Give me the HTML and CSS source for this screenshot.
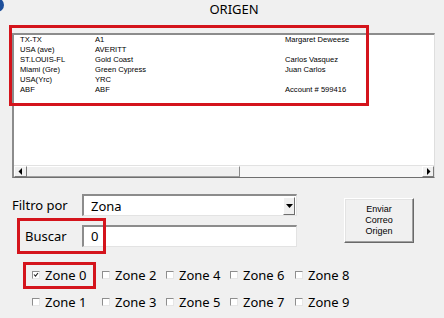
FILE: index.html
```html
<!DOCTYPE html>
<html lang="es">
<head>
<meta charset="utf-8">
<title>ORIGEN</title>
<link rel="stylesheet" href="styles.css">
</head>
<body>
<div class="badge"></div>
<div class="title">ORIGEN</div>

<div class="listbox">
  <div class="rows">
    <div class="row"><span class="c1">TX-TX</span><span class="c2">A1</span><span class="c3">Margaret Deweese</span></div>
    <div class="row"><span class="c1">USA (ave)</span><span class="c2">AVERITT</span><span class="c3"></span></div>
    <div class="row"><span class="c1">ST.LOUIS-FL</span><span class="c2">Gold Coast</span><span class="c3">Carlos Vasquez</span></div>
    <div class="row"><span class="c1">Miami (Gre)</span><span class="c2">Green Cypress</span><span class="c3">Juan Carlos</span></div>
    <div class="row"><span class="c1">USA(Yrc)</span><span class="c2">YRC</span><span class="c3"></span></div>
    <div class="row"><span class="c1">ABF</span><span class="c2">ABF</span><span class="c3">Account # 599416</span></div>
  </div>
  <div class="hscroll">
    <div class="sb-btn sb-left"><svg width="5" height="7" viewBox="0 0 5 7"><path d="M4 0 L4 7 L0.5 3.5 Z" fill="#000"/></svg></div>
    <div class="sb-thumb"></div>
    <div class="sb-track"></div>
    <div class="sb-btn sb-right"><svg width="5" height="7" viewBox="0 0 5 7"><path d="M1 0 L1 7 L4.5 3.5 Z" fill="#000"/></svg></div>
  </div>
  <div class="mark mark-list"></div>
</div>

<div class="form">
  <div class="fields">
    <div class="label">Filtro por</div>
    <div class="combo">
      <span class="combo-text">Zona</span>
      <span class="combo-btn"><svg width="7" height="4" viewBox="0 0 7 4"><path d="M0 0 H7 L3.5 4 Z" fill="#000"/></svg></span>
    </div>
    <div class="label label-indent">Buscar</div>
    <div class="textbox">0</div>
  </div>
  <div class="button">Enviar<br>Correo<br>Origen</div>
  <div class="mark mark-buscar"></div>
</div>

<div class="zones">
  <div class="zone zone-first"><span class="check checked"><svg width="6" height="6" viewBox="0 0 6 6"><path d="M1 2.5 L2.5 4.2 L5 1" fill="none" stroke="#222" stroke-width="1.1"/></svg></span>Zone 0<div class="mark mark-zone"></div></div>
  <div class="zone"><span class="check"></span>Zone 1</div>
  <div class="zone"><span class="check"></span>Zone 2</div>
  <div class="zone"><span class="check"></span>Zone 3</div>
  <div class="zone"><span class="check"></span>Zone 4</div>
  <div class="zone"><span class="check"></span>Zone 5</div>
  <div class="zone"><span class="check"></span>Zone 6</div>
  <div class="zone"><span class="check"></span>Zone 7</div>
  <div class="zone"><span class="check"></span>Zone 8</div>
  <div class="zone"><span class="check"></span>Zone 9</div>
</div>
</body>
</html>
```

FILE: styles.css
```css
* { box-sizing: border-box; }

body {
  margin: 0;
  width: 444px;
  height: 318px;
  overflow: hidden;
  background: #f0f0f0;
  font-family: "Noto Sans", "Open Sans", sans-serif;
  font-size: 13px;
  color: #000;
  position: relative;
}

.badge {
  position: absolute;
  left: -10px;
  top: -2px;
  width: 14px;
  height: 14px;
  border-radius: 50%;
  background: #1d4f9b;
}

.title {
  height: 33px;
  line-height: 18px;
  padding-left: 24px;
  text-align: center;
}

.listbox {
  position: relative;
  margin-left: 12px;
  width: 423px;
  height: 145px;
  background: #fff;
  border-top: 2px solid #8c8c8c;
  border-left: 2px solid #8c8c8c;
  border-right: 1px solid #dedede;
  border-bottom: 1px solid #6f6f6f;
  display: flex;
  flex-direction: column;
}

.rows {
  flex: 1;
  padding: 0 0 0 6px;
  font-family: "Liberation Sans", Arial, sans-serif;
  font-size: 7.6px;
  line-height: 10px;
}

.row {
  display: flex;
  height: 10px;
}

.c1 { width: 75px; }
.c2 { width: 190px; }
.c3 { flex: 1; }

.hscroll {
  height: 12px;
  display: flex;
  border-top: 1px solid #e2e2e2;
  background: #f3f3f3;
}

.sb-btn {
  width: 13px;
  height: 11px;
  display: flex;
  align-items: center;
  justify-content: center;
  background: #f0f0f0;
  border-top: 1px solid #fff;
  border-left: 1px solid #fff;
  border-right: 1px solid #7a7a7a;
  border-bottom: 1px solid #7a7a7a;
}

.sb-right { width: 12px; }

.sb-thumb {
  width: 213px;
  height: 11px;
  background: #f0f0f0;
  border-top: 1px solid #fff;
  border-right: 1px solid #8a8a8a;
  border-bottom: 1px solid #a0a0a0;
}

.sb-track {
  flex: 1;
  background: #f7f7f7;
}

.mark {
  position: absolute;
  border: 3px solid #d4141c;
  pointer-events: none;
}

.mark-list {
  left: -5px;
  top: -10px;
  width: 360px;
  height: 81px;
}

.form {
  position: relative;
  display: flex;
  margin: 16px 0 0 12px;
}

.fields {
  display: grid;
  grid-template-columns: 70px 215px;
  grid-template-rows: 22px 22px;
  row-gap: 9px;
  align-items: center;
}

.label { line-height: 18px; }
.label-indent { padding-left: 13px; }

.combo {
  height: 22px;
  display: flex;
  align-items: center;
  background: #fff;
  border-top: 2px solid #8c8c8c;
  border-left: 2px solid #8c8c8c;
  border-right: 1px solid #e3e3e3;
  border-bottom: 1px solid #e3e3e3;
  padding: 0 1px 0 7px;
}

.combo-text { flex: 1; }

.combo-btn {
  width: 12px;
  height: 18px;
  display: flex;
  align-items: center;
  justify-content: center;
  background: #f0f0f0;
  border-top: 1px solid #fff;
  border-left: 1px solid #fff;
  border-right: 1px solid #6e6e6e;
  border-bottom: 1px solid #6e6e6e;
}

.textbox {
  height: 22px;
  line-height: 19px;
  background: #fff;
  border-top: 2px solid #8c8c8c;
  border-left: 2px solid #8c8c8c;
  border-right: 1px solid #e3e3e3;
  border-bottom: 1px solid #e3e3e3;
  padding-left: 7px;
}

.button {
  width: 70px;
  height: 45px;
  margin: 4px 0 0 47px;
  display: flex;
  align-items: center;
  justify-content: center;
  text-align: center;
  font-family: "Liberation Sans", Arial, sans-serif;
  font-size: 9px;
  line-height: 11px;
  background: #f0f0f0;
  border-top: 1px solid #fff;
  border-left: 1px solid #fff;
  border-right: 1px solid #696969;
  border-bottom: 1px solid #696969;
  box-shadow: inset -1px -1px 0 #a0a0a0, inset 1px 1px 0 #e3e3e3;
}

.mark-buscar {
  left: 5px;
  top: 24px;
  width: 89px;
  height: 36px;
}

.zones {
  display: grid;
  grid-template-columns: 70px 64px 64px 65px 70px;
  grid-template-rows: 18px 18px;
  grid-auto-flow: column;
  row-gap: 9px;
  margin: 19px 0 0 32px;
}

.zone {
  display: flex;
  align-items: center;
  gap: 5px;
  line-height: 18px;
}

.zone-first { position: relative; }

.check {
  width: 8px;
  height: 8px;
  flex: none;
  display: flex;
  align-items: center;
  justify-content: center;
  background: #fff;
  border-top: 1px solid #8e8e8e;
  border-left: 1px solid #8e8e8e;
  border-right: 1px solid #e6e6e6;
  border-bottom: 1px solid #e6e6e6;
}

.mark-zone {
  left: -9px;
  top: -4px;
  width: 73px;
  height: 27px;
}
```
